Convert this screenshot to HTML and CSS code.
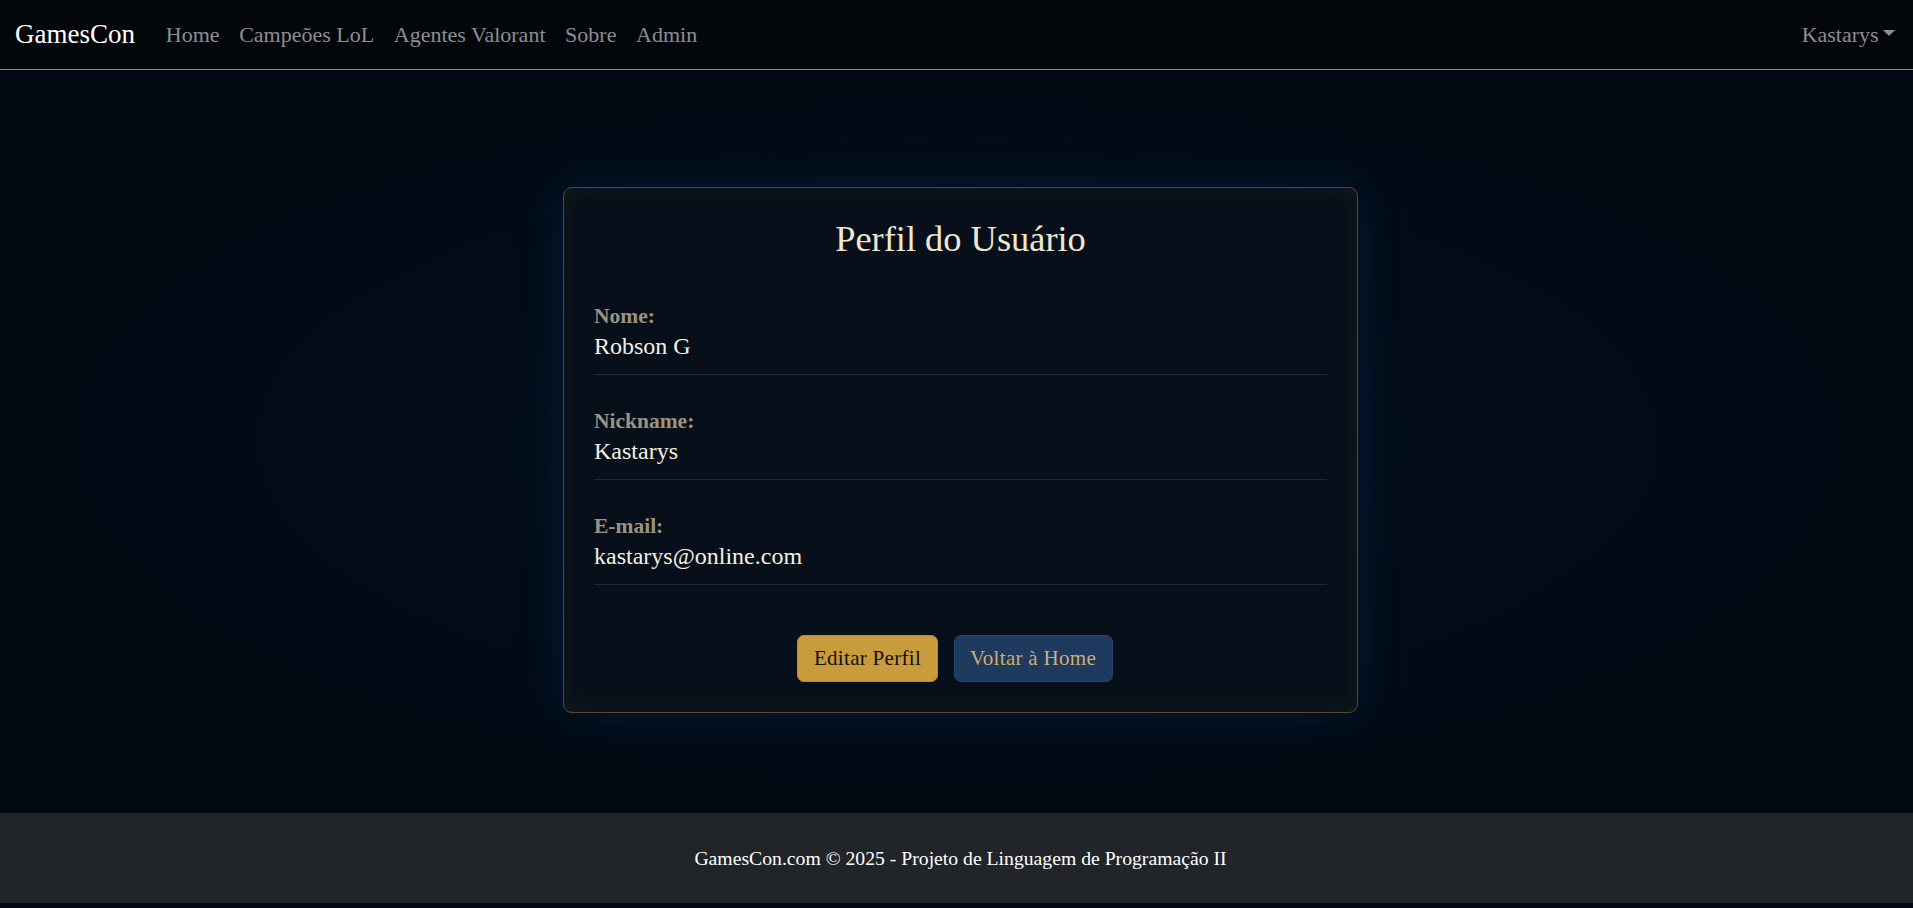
FILE: index.html
```html
<!DOCTYPE html>
<html lang="pt-BR">
<head>
<meta charset="utf-8">
<title>Perfil do Usuário - GamesCon</title>
<link rel="stylesheet" href="styles.css">
</head>
<body>
<nav class="navbar">
  <div class="nav-left">
    <a class="brand" href="#">GamesCon</a>
    <ul class="nav-links">
      <li><a href="#">Home</a></li>
      <li><a href="#">Campeões LoL</a></li>
      <li><a href="#">Agentes Valorant</a></li>
      <li><a href="#">Sobre</a></li>
      <li><a href="#">Admin</a></li>
    </ul>
  </div>
  <a class="user-toggle" href="#">Kastarys</a>
</nav>

<main class="main">
  <section class="card">
    <h2 class="card-title">Perfil do Usuário</h2>
    <div class="field">
      <div class="label">Nome:</div>
      <div class="value">Robson G</div>
    </div>
    <div class="field">
      <div class="label">Nickname:</div>
      <div class="value">Kastarys</div>
    </div>
    <div class="field">
      <div class="label">E-mail:</div>
      <div class="value">kastarys@online.com</div>
    </div>
    <div class="actions">
      <a class="btn btn-gold" href="#">Editar Perfil</a>
      <a class="btn btn-blue" href="#">Voltar à Home</a>
    </div>
  </section>
</main>

<footer class="footer">
  <p>GamesCon.com © 2025 - Projeto de Linguagem de Programação II</p>
</footer>
</body>
</html>
```

FILE: styles.css
```css
* {
  box-sizing: border-box;
}

html, body {
  margin: 0;
  padding: 0;
}

body {
  min-height: 100vh;
  display: flex;
  flex-direction: column;
  background: #010a13;
  font-family: "Liberation Serif", "Times New Roman", serif;
  color: #f0e6d2;
}

a {
  text-decoration: none;
}

/* NAVBAR */
.navbar {
  height: 70px;
  display: flex;
  align-items: center;
  justify-content: space-between;
  padding: 0 18px 0 15px;
  background: #03070b;
  border-bottom: 1px solid #a88a4f;
}

.nav-left {
  display: flex;
  align-items: center;
}

.brand {
  color: #ffffff;
  font-size: 27px;
  margin-right: 21px;
}

.nav-links {
  display: flex;
  list-style: none;
  margin: 0;
  padding: 0;
}

.nav-links a {
  display: block;
  padding: 8px 9.8px;
  font-size: 22px;
  color: #8c8e90;
}

.user-toggle {
  font-size: 22px;
  color: #8c8e90;
}

.user-toggle::after {
  content: "";
  display: inline-block;
  margin-left: 0.2em;
  vertical-align: 0.255em;
  border-top: 0.3em solid;
  border-left: 0.3em solid transparent;
  border-right: 0.3em solid transparent;
}

/* MAIN */
.main {
  flex: 1;
  display: flex;
  justify-content: center;
  align-items: flex-start;
  padding: 117px 0 0 8px;
  background: radial-gradient(ellipse at 50% 50%, #031020 0%, #010a13 70%);
}

.card {
  width: 795px;
  padding: 30px 30px 30px;
  background: #07101a;
  border: 1px solid #5a4827;
  border-radius: 9px;
  box-shadow: 0 0 40px rgba(8, 45, 95, 0.45), inset 0 0 22px rgba(200, 155, 60, 0.07);
}

.card-title {
  margin: 0 0 43px;
  text-align: center;
  font-weight: 400;
  font-size: 36.4px;
  line-height: 43px;
  color: #f0e6d2;
}

.field {
  padding-bottom: 10px;
  margin-bottom: 34px;
  border-bottom: 1px solid #1b2a3a;
}

.label {
  font-weight: 700;
  font-size: 21.5px;
  line-height: 24px;
  color: #9d9380;
}

.value {
  font-size: 24px;
  line-height: 36px;
  color: #f5efe3;
}

.actions {
  display: flex;
  justify-content: center;
  gap: 16px;
  padding-right: 11px;
  margin-top: 50px;
}

.btn {
  display: inline-block;
  padding: 7px 15.5px;
  font-size: 21px;
  line-height: 31px;
  letter-spacing: 0.3px;
  border-radius: 7px;
  border: 1px solid transparent;
}

.btn-gold {
  background: #c89b3c;
  border-color: #b88c34;
  color: #111111;
}

.btn-blue {
  background: #1e3a5f;
  border-color: #25466e;
  color: #cdae6e;
}

/* FOOTER */
.footer {
  height: 90px;
  margin-bottom: 5px;
  padding-left: 8px;
  display: flex;
  align-items: center;
  justify-content: center;
  background: #212529;
}

.footer p {
  margin: 0;
  font-size: 19.7px;
  color: #ffffff;
}
```
